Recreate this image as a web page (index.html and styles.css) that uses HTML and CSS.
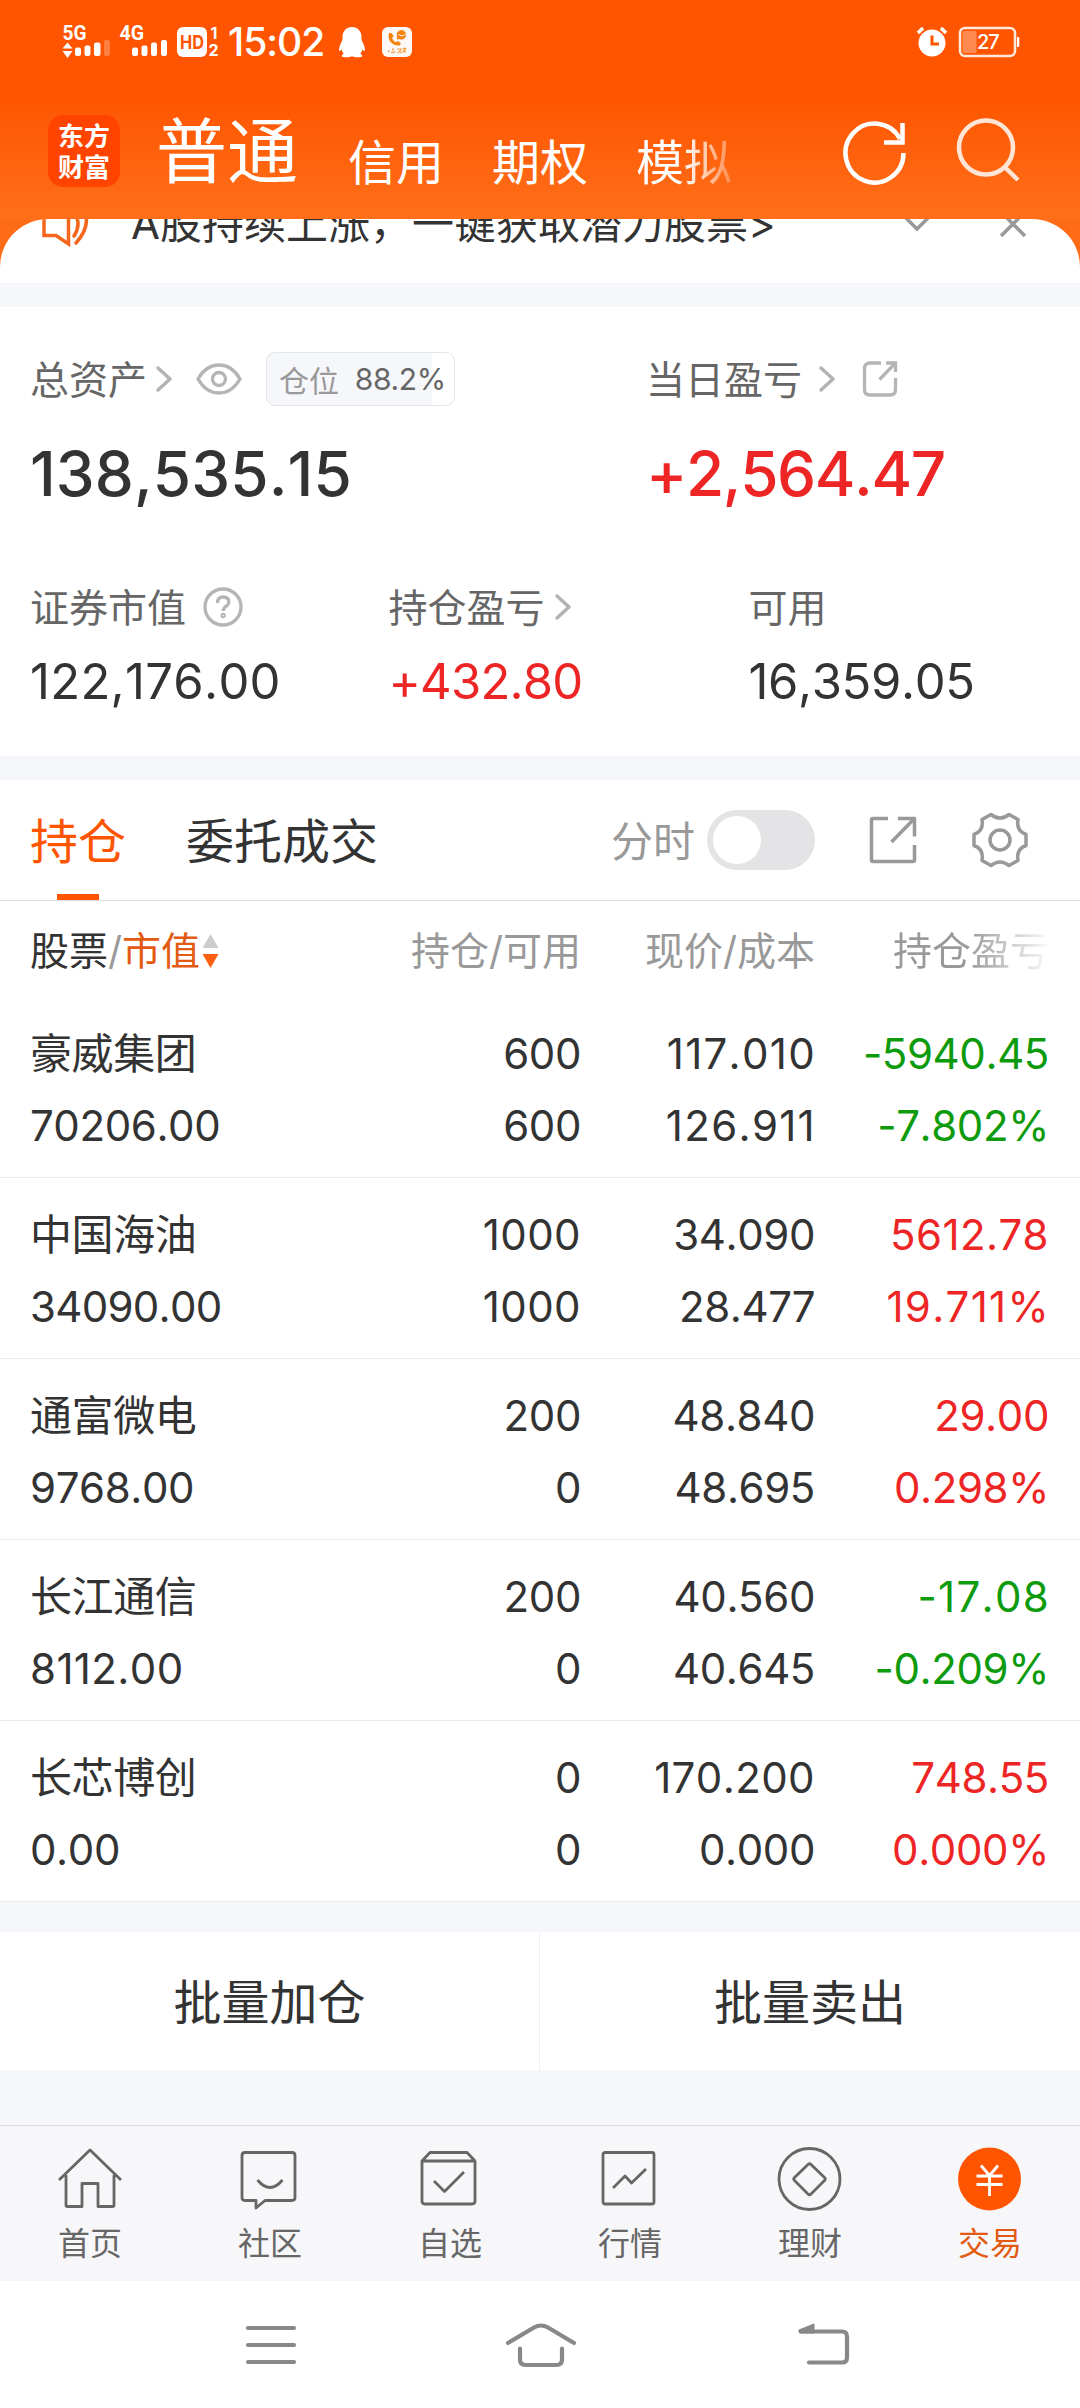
FILE: index.html
```html
<!DOCTYPE html>
<html lang="zh-CN">
<head>
<meta charset="utf-8">
<title>交易</title>
<link rel="stylesheet" href="styles.css">
</head>
<body>
<header class="top">
  <div class="status">
    <svg class="status-left" width="160" height="36" viewBox="60 24 160 36">
      <text class="net" x="62.500" y="40" textLength="24" lengthAdjust="spacingAndGlyphs">5G</text>
      <path d="M67.500 42.500l5 6h-10zM62.500 51h10l-5 7z"/>
      <rect x="75" y="47.500" width="6" height="8.500" rx="2"/><rect x="84.500" y="45.500" width="6" height="10.500" rx="2"/><rect x="94" y="42.500" width="6.500" height="13.500" rx="2"/><rect x="104" y="40" width="6" height="16" rx="2" opacity=".25"/>
      <text class="net" x="119.500" y="40" textLength="24.500" lengthAdjust="spacingAndGlyphs">4G</text>
      <rect x="132" y="47.500" width="6" height="8.500" rx="2"/><rect x="141.500" y="45.500" width="6" height="10.500" rx="2"/><rect x="151" y="42.500" width="6" height="13.500" rx="2"/><rect x="161" y="40" width="6" height="16" rx="2"/>
      <rect x="177" y="27" width="30" height="30" rx="6"/>
      <text class="hd" x="180" y="49" textLength="24" lengthAdjust="spacingAndGlyphs">HD</text>
      <text class="sim" x="210.500" y="39">1</text><text class="sim" x="208.500" y="56">2</text>
    </svg>
    <span class="clock">15:02</span>
    <svg class="qq" width="26" height="31" viewBox="0 0 26 31"><path d="M13 0c6 0 9.500 4.500 9.500 10v3c1.500 3 3.500 6.500 3.500 10 0 1-.8 1.800-2.500-.8-.5 2-1.200 3.200-2.300 4.500 1.500.8 2 1.300 2 2 0 1.200-1.400 1.600-4.200 1.600-2.500 0-4.500-.4-6-1-1.500.6-3.500 1-6 1-2.800 0-4.200-.4-4.200-1.600 0-.7.5-1.200 2-2-1.100-1.300-1.800-2.500-2.300-4.500C.8 24.800 0 24 0 23c0-3.500 2-7 3.500-10v-3C3.500 4.500 7 0 13 0z"/></svg>
    <svg class="call" width="30" height="30" viewBox="0 0 30 30"><rect width="30" height="30" rx="6" fill="#fbf8f5"/><path d="M19.500 3a4.800 4.800 0 1 1-2.500 9l-2.500.5.8-2.500A4.800 4.800 0 0 1 19.500 3z" fill="#f5820b"/><path d="M7 6c-2 7 3 13 10.500 12.500l1.500-2-3-2.500-2 1.300c-2.200-.8-3.400-2.300-3.800-4.500l1.500-1.500L9.500 6z" fill="#f5820b"/><path d="M16.500 7.500l3 1.500 4-1.500" stroke="#fff" fill="none"/><path d="M6 25l1.500-2M9 25q2 1.500 4-.5M11 21v3M15 22h4q-1 3-3.500 4M17.500 24l2 2M20.500 21.500h4M23 20.500v5.500M22.500 22q-.5 2-2 3.500" stroke="#f5a04c" stroke-width="1.200" fill="none"/></svg>
    <svg class="alarm" width="30" height="30" viewBox="0 0 30 30"><circle cx="15" cy="16" r="13.500" fill="#fff"/><path d="M1 6l5-5M29 6l-5-5" stroke="#fff" stroke-width="3.500"/><path d="M15 8.500V17h7" fill="none" stroke="#ff5500" stroke-width="3"/></svg>
    <svg class="battery" width="61" height="30" viewBox="0 0 61 30"><rect x="1" y="1" width="55" height="28" rx="5" fill="none" stroke="#ffe9dc" stroke-width="2.500"/><rect x="3.500" y="4" width="14" height="22" rx="1.500" fill="#ff8b50"/><path d="M58 10h1.500q.8 0 .8 1v8q0 1-.8 1H58z" fill="#fff"/><text class="charge" x="18" y="22">27</text></svg>
  </div>
  <nav class="accounts">
    <div class="logo"><span>东方</span><span>财富</span></div>
    <span class="acct acct-on">普通</span>
    <span class="acct">信用</span>
    <span class="acct">期权</span>
    <span class="acct acct-fade">模拟</span>
    <svg class="refresh" width="64" height="66" viewBox="0 0 64 66" stroke="#fff" stroke-width="4.500"><path d="M60.500 34A29 29.500 0 1 1 57 20"/><path d="M59.500 4v19.500H41"/></svg>
    <svg class="search" width="64" height="66" viewBox="0 0 64 66" stroke="#ffe5d6" stroke-width="4.500"><circle cx="30" cy="30.500" r="27"/><path d="M48 49.500L62 63"/></svg>
  </nav>
</header>
<div class="notice-wrap">
  <div class="notice">
    <div class="notice-row">
      <svg width="48" height="48" viewBox="0 0 48 48" stroke="#f4661b" stroke-width="3.500"><path d="M3 12.500h12L27.500 2v42L15 35.500H3z"/><path d="M33 12q8 12 0 24M40 4q13 19-5 39" stroke-linecap="round"/></svg>
      <span class="notice-text">A股持续上涨，一键获取潜力股票&gt;</span>
      <svg class="n-down" width="30" height="20" viewBox="0 0 30 20"><path d="M2 2l13 13L28 2"/></svg>
      <svg class="n-close" width="28" height="28" viewBox="0 0 28 28"><path d="M2 2l24 24M26 2L2 26"/></svg>
    </div>
  </div>
</div>
<section class="assets">
  <div class="pair">
    <div>
      <div class="label"><span>总资产</span><svg class="chev" width="18" height="28" viewBox="0 0 18 28"><path d="M3 3l12 11L3 25"/></svg>
        <svg class="eye" width="46" height="32" viewBox="0 0 46 32"><path d="M2 16Q10 2 23 2t21 14Q36 30 23 30T2 16z"/><circle cx="23" cy="16" r="6.500"/></svg>
        <span class="ratio"><i>仓位</i><b>88.2%</b></span></div>
      <div class="big">138,535.15</div>
    </div>
    <div>
      <div class="label"><span>当日盈亏</span><svg class="chev chev-far" width="18" height="28" viewBox="0 0 18 28"><path d="M3 3l12 11L3 25"/></svg>
        <svg class="share" width="34" height="36" viewBox="0 0 34 36"><path d="M18 2H7Q1.500 2 1.500 7.500v21Q1.500 34 7 34h20q5.500 0 5.500-5.500V17M23 2h9.500v9M32 2.500L16.500 18.500"/></svg></div>
      <div class="big big-gain up">+2,564.47</div>
    </div>
  </div>
  <div class="trio">
    <div><div class="label"><span>证券市值</span><svg class="help" width="40" height="40" viewBox="0 0 40 40"><circle cx="20" cy="20" r="18"/><path d="M14.500 16q0-6 5.700-6t5.700 5.200c0 4-5.700 4-5.700 8.800"/><circle cx="20.200" cy="28.500" r="1"/></svg></div><div class="mid mid-wide">122,176.00</div></div>
    <div><div class="label"><span>持仓盈亏</span><svg class="chev chev-near" width="18" height="28" viewBox="0 0 18 28"><path d="M3 3l12 11L3 25"/></svg></div><div class="mid mid-gain up">+432.80</div></div>
    <div><div class="label"><span>可用</span></div><div class="mid">16,359.05</div></div>
  </div>
</section>
<main class="holdings">
  <div class="tabs">
    <span class="tab tab-on">持仓</span><span class="tab">委托成交</span>
    <span class="minute">分时</span><span class="toggle"></span>
    <svg class="export" width="48" height="48" viewBox="0 0 48 48"><path d="M19 2.500H4Q2.500 2.500 2.500 4v40q0 1.500 1.500 1.500h40q1.500 0 1.500-1.500V29M29 2.500h16.500v18M45 3L22.500 26"/></svg>
    <svg class="gear" width="56" height="56" viewBox="0 0 56 56"><path d="M19 2.500Q28 9.500 37 2.500L46 7.500Q44 19 54 22.500V33.500Q44 37 46 48.500L37 53.500Q28 46.500 19 53.500L10 48.500Q12 37 2 33.500V22.500Q12 19 10 7.500Z"/><circle cx="28" cy="28" r="10"/></svg>
  </div>
  <div class="row head">
    <span class="sort"><em>股票</em>/<strong>市值</strong><svg width="17" height="36" viewBox="0 0 17 36"><path d="M8.500 1L16.500 15H.5z" fill="#ccc"/><path d="M.5 21h16L8.500 35z" fill="#fb5f11"/></svg></span>
    <span>持仓/可用</span><span>现价/成本</span><span class="head-fade">持仓盈亏</span>
  </div>
  <div class="row stock"><div>豪威集团<br>70206.00</div><div>600<br>600</div><div><span class="wider">117.010</span><br><span class="wider">126.911</span></div><div class="down">-5940.45<br>-7.802%</div></div>
  <div class="row stock"><div>中国海油<br><span class="tight">34090.00</span></div><div><span class="wide">1000</span><br><span class="wide">1000</span></div><div>34.090<br>28.477</div><div class="up"><span class="wide">5612.78</span><br><span class="wider">19.711%</span></div></div>
  <div class="row stock"><div>通富微电<br>9768.00</div><div>200<br>0</div><div>48.840<br>48.695</div><div class="up">29.00<br>0.298%</div></div>
  <div class="row stock"><div>长江通信<br><span class="wide">8112.00</span></div><div>200<br>0</div><div>40.560<br>40.645</div><div class="down"><span class="wider">-17.08</span><br>-0.209%</div></div>
  <div class="row stock"><div>长芯博创<br>0.00</div><div>0<br>0</div><div><span class="wide">170.200</span><br>0.000</div><div class="up">748.55<br>0.000%</div></div>
</main>
<div class="batch"><span>批量加仓</span><span>批量卖出</span></div>
<nav class="tabbar">
  <div><svg width="66" height="66" viewBox="0 0 66 66"><path d="M2 34L33 4l31 30M9 29v30q0 1.500 1.500 1.500H25V37.500h16v23h14.500q1.500 0 1.500-1.500V29"/></svg>首页</div>
  <div><svg width="66" height="66" viewBox="0 0 66 66"><path d="M8 6.500h47q3 0 3 3v42q0 3-3 3H28l-9 7.500v-7.500H8q-3 0-3-3v-42q0-3 3-3zM20.500 34q12.500 15 25 0"/></svg>社区</div>
  <div><svg width="66" height="66" viewBox="0 0 66 66"><path d="M5 15L13 6.500h37L58 15v40q0 3-3 3H8q-3 0-3-3zM5 15h53M17 35l10.500 10.500L47 26"/></svg>自选</div>
  <div><svg width="66" height="66" viewBox="0 0 66 66"><rect x="6" y="6.500" width="51" height="51.500" rx="2"/><path d="M16 42l12-12 6.500 7L49 23"/></svg>行情</div>
  <div><svg width="66" height="66" viewBox="0 0 66 66"><circle cx="32.500" cy="33" r="30.500"/><path d="M31 18.500q1.500-1.500 3 0l13.500 13q1.500 1.500 0 3l-13.500 13.500q-1.500 1.500-3 0L17.500 34.500q-1.500-1.500 0-3z"/></svg>理财</div>
  <div class="active"><svg width="66" height="66" viewBox="0 0 66 66"><circle cx="32.500" cy="33" r="31.500" class="disc"/><path class="yen" d="M24 19.500l8.500 10 8.500-10M19.500 30h26M19.500 38.500h26M32.500 29v21"/></svg>交易</div>
</nav>
<footer class="sysnav">
  <svg width="52" height="44" viewBox="0 0 52 44"><path d="M3 5h46M3 22h46M3 39h46"/></svg>
  <svg class="home" width="72" height="46" viewBox="0 0 72 46"><path d="M3 21L29 5.500q7-4 14 0L69 21M15 26.500v11q0 5.500 5.500 5.500h31q5.500 0 5.500-5.500v-11"/></svg>
  <svg class="back" width="54" height="44" viewBox="0 0 54 44"><path d="M4 8.500h41q5 0 5 5v21q0 5-5 5H12"/><path class="tip" d="M2 7L17 1v9H3z"/></svg>
</footer>
</body>
</html>
```
FILE: styles.css
```css
* { box-sizing: border-box; }
body { margin: 0; width: 1080px; height: 2408px; overflow: hidden; background: #f6f7fa; color: #333; font-family: Inter, "Noto Sans CJK SC", sans-serif; }
svg { display: block; flex: none; fill: none; overflow: visible; }
i, em { font-style: normal; }
b, strong { font-weight: 400; }
.up { color: #ee2525; }
.down { color: #0d9b0d; }

.top { height: 219px; background: linear-gradient(#ff5500 0, #ff5500 96px, #ff6f1a 219px); color: #fff; }
.status { display: flex; align-items: center; height: 84px; padding-left: 60px; }
.status-left, .qq { fill: #fff; }
.net { font: 700 21px Roboto, sans-serif; }
.hd { font: 700 19px Inter, sans-serif; fill: #ff5500; }
.sim { font: 700 16px Inter, sans-serif; }
.charge { font: 500 20px Inter, sans-serif; fill: #fff; letter-spacing: -1px; }
.clock { width: 110px; margin-left: 8px; font-size: 39px; font-weight: 500; letter-spacing: -1px; line-height: 84px; }
.qq { margin-left: 1px; }
.call { margin-left: 17px; }
.alarm { margin-left: 505px; }
.battery { margin-left: 12px; }
.accounts { display: flex; height: 135px; padding: 31px 0 0 48px; }
.logo { width: 72px; height: 72px; margin-right: 36px; padding-top: 4px; border-radius: 15px; background: #ff4400; font: 700 26px/31px "Noto Sans CJK SC", sans-serif; text-align: center; }
.logo span { display: block; }
.acct { width: 96px; margin: 18px 48px 0 0; font-size: 48px; line-height: 60px; }
.acct-on { width: 144px; margin: 6px 48px 0 0; font-size: 71px; }
.acct-fade { color: transparent; background: linear-gradient(90deg, #fff 50%, #ff8b4b 100%); background-clip: text; -webkit-background-clip: text; margin-right: 0; }
.refresh { margin: 4px 0 0 111px; }
.search { margin: 2px 0 0 49px; }

.notice-wrap { background: #ff6c17; }
.notice { height: 64px; overflow: hidden; border-radius: 48px 48px 0 0; background: #fff; }
.notice-row { display: flex; align-items: center; height: 76px; margin-top: -33px; padding-left: 41px; }
.notice-text { width: 660px; margin-left: 42px; font-size: 42px; line-height: 76px; white-space: nowrap; }
.n-down, .n-close { stroke: #999; stroke-width: 3.500; }
.n-down { margin-left: 111px; }
.n-close { margin-left: 67px; }

.assets { height: 449px; margin-top: 24px; padding: 42px 30px 0; background: #fff; }
.label { display: flex; align-items: center; height: 60px; font-size: 39px; color: #666; white-space: nowrap; }
.label > span:first-child { padding-bottom: 4px; }
.chev { margin-left: 8px; stroke: #b3b3b3; stroke-width: 3.500; stroke-linecap: round; stroke-linejoin: round; }
.chev-far { margin-left: 16px; }
.chev-near { margin-left: 9px; }
.eye, .share, .help { stroke: #b5b5b5; stroke-width: 3.300; }
.eye { margin-left: 23px; }
.share { margin-left: 27px; }
.help { margin-left: 17px; }
.ratio { display: flex; align-items: center; justify-content: space-between; width: 189px; height: 54px; margin-left: 24px; padding: 0 8px 0 12px; border: 1px solid #e4e5e8; border-radius: 9px; background: linear-gradient(90deg, #f6f7fa 88.2%, #fff 88.2%); font-size: 30px; }
.ratio i { color: #999; }
.ratio b { letter-spacing: -.3px; }
.big, .mid, .stock { font-kerning: none; letter-spacing: -.4px; }
.pair { display: grid; grid-template-columns: 616px 1fr; height: 228px; }
.big { margin-top: 25px; font-size: 62px; line-height: 80px; font-weight: 500; letter-spacing: .1px; }
.big-gain { letter-spacing: -1.400px; }
.trio { display: grid; grid-template-columns: 358.500px 360px 1fr; }
.mid { margin-top: 9px; font-size: 49px; line-height: 72px; }
.mid-wide { letter-spacing: .3px; }
.mid-gain { letter-spacing: -.8px; }

.holdings { margin-top: 24px; background: #fff; }
.tabs { display: flex; align-items: center; height: 121px; padding-left: 30px; border-bottom: 1px solid #ddd; font-size: 48px; }
.tab { height: 120px; line-height: 123px; margin-right: 60px; }
.tab-on { color: #ff5500; background: linear-gradient(#ff5500, #ff5500) 27px 114px / 42px 6px no-repeat; }
.minute { width: 94px; margin-left: 173px; padding-bottom: 3px; color: #999; font-size: 42px; }
.toggle { width: 108px; height: 60px; margin-left: 2px; padding: 6px; border-radius: 30px; background: #e4e4e6; }
.toggle::before { content: ""; display: block; width: 48px; height: 48px; border-radius: 50%; background: #fff; }
.export, .gear { stroke: #999; stroke-width: 3.500; stroke-linejoin: round; }
.export { margin-left: 54px; }
.gear { margin-left: 55px; }
.row { display: grid; grid-template-columns: 351px 200px 234px 1fr; padding: 0 31px 0 30px; text-align: right; }
.row > :first-child { text-align: left; }
.head { height: 96px; line-height: 100px; font-size: 39px; color: #999; white-space: nowrap; }
.sort { display: flex; align-items: center; height: 100px; }
.sort em { color: #333; }
.sort strong { color: #e35a12; }
.sort svg { margin-left: 2px; }
.head-fade { color: transparent; background: linear-gradient(90deg, #999 65%, #f4f4f4 98%); background-clip: text; -webkit-background-clip: text; }
.stock { height: 181px; padding-top: 21px; border-bottom: 1px solid #ebebed; font-size: 42px; line-height: 72px; }
.tight { letter-spacing: -.7px; }
.wide { letter-spacing: .4px; }
.wider { margin-right: -1px; letter-spacing: 1.300px; }

.batch { display: grid; grid-template-columns: 1fr 1fr; height: 138px; margin-top: 30px; background: #fff; font-size: 48px; line-height: 141px; text-align: center; }
.batch span:first-child { border-right: 1px solid #f0f0f3; }
.tabbar { display: grid; grid-template-columns: repeat(6, 1fr); height: 156px; margin-top: 55px; border-top: 1px solid #dedfe2; background: #f7f7fa; color: #666; font-size: 32px; line-height: 63px; text-align: center; }
.tabbar svg { margin: 20px auto 0; stroke: #666; stroke-width: 2.800; stroke-linejoin: round; }
.active { color: #e35a12; }
.tabbar .disc { fill: #ff5500; stroke: none; }
.tabbar .yen { stroke: #fff; }
.sysnav { display: flex; align-items: center; height: 127px; padding-left: 245px; background: #fff; stroke: #888; stroke-width: 4.200; stroke-linecap: round; stroke-linejoin: round; }
.home { margin-left: 208px; }
.back { margin-left: 220px; }
.sysnav .tip { fill: #888; stroke-width: 1; }
```
